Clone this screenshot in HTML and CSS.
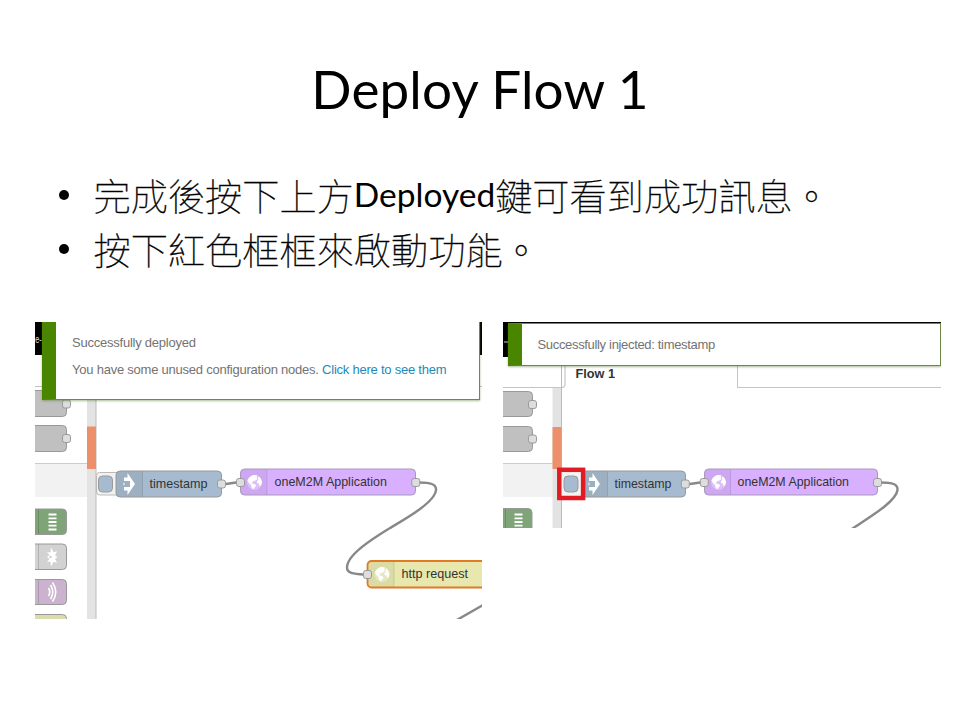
FILE: index.html
```
<!DOCTYPE html>
<html lang="zh-Hant">
<head>
<meta charset="utf-8">
<title>Deploy Flow 1</title>
<link rel="stylesheet" href="styles.css">
</head>
<body>
<svg class="defs" width="0" height="0" aria-hidden="true">
  <defs>
    <g id="port"><rect x="-4" y="-4" width="8" height="8" rx="2.3" fill="#dddddd" stroke="#999999"/></g>
    <g id="arrow"><path d="M-5-6.500H-1.500V-11L6 0L-1.500 11V6.500H-5V3H1V-3H-5Z" fill="#fff"/><path d="M-6 2.800H1V-2.800H-6Z" fill="#9cb0c3"/><path d="M-6-1.200H-4V1.200H-6Z" fill="#fff" fill-opacity=".5"/></g>
    <g id="globe">
      <circle r="7.500" fill="#fff" fill-opacity=".3"/>
      <path d="M-7-2C-6-5-3-7.500 0-7.500L3-7L2-5L3-3.500L1-2L-1-1.500L-2 0L-4 .5L-2 1L1 2L1.500 3.500L0 5L-1 7L-3 5L-3.500 2.500L-6 0Z" fill="#fff"/>
      <path d="M4-6.300C6-5 7.300-2.500 7.500 0L6.500 3L5 3.500L4.500 1L2.500 .5L2.500-1.500L4-2.500L3.500-4.500Z" fill="#fff"/>
    </g>
    <g id="bars"><path d="M-4-7.500H4M-4-3.700H4M-4 0H4M-4 3.700H4M-4 7.500H4" stroke="#fff" stroke-width="1.800"/></g>
  </defs>
</svg>
<main class="slide">
  <h1 class="title">Deploy Flow 1</h1>
  <ul class="points">
    <li>完成後按下上方<span class="latin">Deployed</span>鍵可看到成功訊息。</li>
    <li>按下紅色框框來啟動功能。</li>
  </ul>
  <div class="shots">
    <section class="shot shot-deployed">
      <svg class="canvas" viewBox="35 322 447 297">
        <path d="M35 322H482V355H35Z" fill="#000"/>
        <text x="35.200" y="343" class="node-text header-text" textLength="6.600" lengthAdjust="spacingAndGlyphs">e-</text>
        <path d="M35 355H482V387H35Z" fill="#fff"/>
        <path d="M35 386.500H482" stroke="#c4c4c4"/>
        <g stroke="#999" fill="#c0c0c0">
          <rect x="20" y="390.500" width="46.500" height="26" rx="4"/>
          <rect x="20" y="425.500" width="46.500" height="26" rx="4"/>
        </g>
        <use href="#port" x="66.500" y="404"/><use href="#port" x="66.500" y="438.500"/>
        <path d="M35 464H87V497H35Z" fill="#f2f2f2"/><path d="M35 463.500H87" stroke="#ccc"/>
        <path d="M87 387H96V619H87Z" fill="#e3e3e3"/><path d="M96 387V619" stroke="#bbb"/>
        <path d="M87 426.500H96V469H87Z" fill="#ee8f6b"/>
        <g stroke="#999">
          <rect x="20" y="509" width="46.500" height="25.500" rx="4" fill="#7fa478"/>
          <rect x="20" y="544" width="46.500" height="25.500" rx="4" fill="#d2d2d2"/>
          <rect x="20" y="579.500" width="46.500" height="25" rx="4" fill="#cbb3cf"/>
          <rect x="20" y="614.500" width="46.500" height="25" rx="4" fill="#dcdcaa"/>
        </g>
        <path d="M38.500 509V534M38.500 544V569M38.500 580V604" stroke="#000" stroke-opacity=".15"/>
        <use href="#bars" x="52.500" y="522"/>
        <path d="M51 547.500L53.500 552L57 551.500L55 555.500L57.500 557L55 559L57 562.500L53.500 562L51 566.500L50.500 561.500L47 562L49.500 559L47 557L49.500 555L47 552L50.500 552.500Z" fill="#fff"/>
        <circle cx="50.500" cy="557" r="1.300" fill="#d2d2d2"/>
        <g fill="none" stroke="#fff" stroke-width="1.600"><path d="M48.500 588Q51 592 48.500 596"/><path d="M50.500 585Q55 592 50.500 599"/><path d="M52.500 582.500Q59 592 52.500 601.500"/></g>
        <rect x="96.500" y="472.500" width="30" height="22.500" rx="3" fill="#f1f1f1" stroke="#bbb"/>
        <rect x="98.500" y="476" width="14" height="16" rx="4" fill="#a6bbcf" stroke="#999"/>
        <rect x="116" y="471" width="105.500" height="26" rx="4" fill="#a6bbcf" stroke="#999"/>
        <path d="M116.500 475Q116.500 471.500 120 471.500H142.500V496.500H120Q116.500 496.500 116.500 493Z" fill="#000" fill-opacity=".06"/>
        <path d="M142.500 471.500V496.500" stroke="#000" stroke-opacity=".1"/>
        <use href="#arrow" x="129" y="484"/>
        <text x="149.500" y="487.500" class="node-text" textLength="58" lengthAdjust="spacingAndGlyphs">timestamp</text>
        <g class="wire">
          <path d="M225 484C230 484 232 482.500 237 482.500"/>
          <path d="M419 482.500C430 482.500 436.500 484 436 490C435 502 407 518 390 528C372 539 347 555 347 567.500C347 573 353 574 364 574.500"/>
          <path d="M456 620.500L484 604.500"/>
        </g>
        <rect x="240.500" y="469" width="175" height="26" rx="4" fill="#d8b0ff" stroke="#a99ab8"/>
        <path d="M241 473Q241 469.500 244 469.500H267V494.500H244Q241 494.500 241 491Z" fill="#000" fill-opacity=".05"/>
        <path d="M267 469.500V494.500" stroke="#000" stroke-opacity=".1"/>
        <use href="#globe" x="254.500" y="482.500"/>
        <text x="274.500" y="485.800" class="node-text" textLength="112.500" lengthAdjust="spacingAndGlyphs">oneM2M Application</text>
        <use href="#port" x="221.500" y="484"/><use href="#port" x="240.500" y="482.500"/><use href="#port" x="415.800" y="482.500"/>
        <rect x="367.500" y="561" width="130" height="26.500" rx="4" fill="#e7e7ae"/>
        <path d="M368 562H394V587H368Z" fill="#000" fill-opacity=".05"/><path d="M394 562V587" stroke="#000" stroke-opacity=".1"/>
        <rect x="367.500" y="561" width="130" height="26.500" rx="4" fill="none" stroke="#e07b24" stroke-width="1.800"/>
        <use href="#globe" x="382" y="574.500"/><use href="#port" x="367.500" y="574.500"/>
        <text x="401.500" y="577.800" class="node-text" textLength="66.500" lengthAdjust="spacingAndGlyphs">http request</text>
      </svg>
      <div class="notice">
        <p>Successfully deployed</p>
        <p>You have some unused configuration nodes. <a>Click here to see them</a></p>
      </div>
    </section>
    <section class="shot shot-injected">
      <svg class="canvas" viewBox="503 322 438 206">
        <path d="M503 322H941V357H503Z" fill="#000"/>
        <path d="M504 342H508" stroke="#ccc"/>
        <path d="M508 357H941V388H508Z" fill="#fff"/>
        <path d="M503 387.500H562M737.500 387.500H941M737.500 366V388" stroke="#c4c4c4" fill="none"/>
        <g stroke="#999" fill="#c0c0c0">
          <rect x="490" y="391.500" width="42.500" height="25" rx="4"/>
          <rect x="490" y="426.500" width="42.500" height="25" rx="4"/>
        </g>
        <use href="#port" x="532.500" y="404.500"/><use href="#port" x="532.500" y="439"/>
        <path d="M503 464H553V497H503Z" fill="#f2f2f2"/><path d="M503 463.500H553" stroke="#ccc"/>
        <path d="M552.500 388H561V528H552.500Z" fill="#e3e3e3"/><path d="M561.500 366V528M565 366V385Q565 387.500 562 387.500" stroke="#bbb" fill="none"/>
        <path d="M552.500 427H561.500V469H552.500Z" fill="#ee8f6b"/>
        <text x="575.500" y="378" class="node-text tab" textLength="39.500" lengthAdjust="spacingAndGlyphs">Flow 1</text>
        <rect x="490" y="508.500" width="42" height="26" rx="4" fill="#7fa478" stroke="#999"/>
        <path d="M505.500 509V530" stroke="#000" stroke-opacity=".15"/>
        <use href="#bars" x="518.500" y="522"/>
        <rect x="580" y="471" width="105.500" height="26" rx="4" fill="#a6bbcf" stroke="#999"/>
        <path d="M581 471.500H607.500V496.500H581Z" fill="#000" fill-opacity=".06"/>
        <path d="M607.500 471.500V496.500" stroke="#000" stroke-opacity=".1"/>
        <use href="#arrow" x="594" y="484"/>
        <rect x="559.300" y="469.800" width="23.800" height="28.200" fill="#f3f3f3" stroke="#e01b24" stroke-width="4.500"/>
        <rect x="564" y="476" width="14" height="16" rx="4" fill="#a6bbcf" stroke="#999"/>
        <text x="614.500" y="487.500" class="node-text" textLength="57" lengthAdjust="spacingAndGlyphs">timestamp</text>
        <g class="wire">
          <path d="M689 484C694 484 696 482.500 701 482.500"/>
          <path d="M881 482.500C892 482.500 898 484 897.500 490C896 502 868 518 851 529.500"/>
        </g>
        <rect x="704.500" y="469" width="173" height="26" rx="4" fill="#d8b0ff" stroke="#a99ab8"/>
        <path d="M705 473Q705 469.500 708 469.500H730.500V494.500H708Q705 494.500 705 491Z" fill="#000" fill-opacity=".05"/>
        <path d="M730.500 469.500V494.500" stroke="#000" stroke-opacity=".1"/>
        <use href="#globe" x="718.500" y="482.500"/>
        <text x="737.500" y="485.800" class="node-text" textLength="111.500" lengthAdjust="spacingAndGlyphs">oneM2M Application</text>
        <use href="#port" x="685.300" y="484"/><use href="#port" x="704.300" y="482.500"/><use href="#port" x="877.500" y="482.500"/>
      </svg>
      <div class="notice">
        <p>Successfully injected: timestamp</p>
      </div>
    </section>
  </div>
</main>
</body>
</html>
```
FILE: styles.css
```
* { box-sizing: border-box; }
body { margin: 0; background: #fff; color: #000; }
.defs { position: absolute; }
.slide { width: 960px; height: 720px; overflow: hidden; padding: 53px 19px 0 35px; }
.title {
  margin: 0 0 0 -16px;
  height: 115px;
  font: 400 53px/72px Lato, sans-serif;
  text-align: center;
  letter-spacing: 0.15px;
}
.points { list-style: none; margin: 0; padding: 0 0 0 58.500px; height: 154px; }
.points li {
  position: relative;
  height: 54px;
  line-height: 54px;
  font-family: "Noto Sans CJK TC", sans-serif;
  font-size: 37.2px;
  font-weight: 100;
  -webkit-text-stroke: 0.35px #000;
  white-space: nowrap;
}
.points li::before {
  content: "";
  position: absolute;
  left: -35px;
  top: 22px;
  width: 10px;
  height: 10px;
  border-radius: 50%;
  background: #000;
}
.latin {
  position: relative;
  top: -4px;
  font-family: Lato, sans-serif;
  font-size: 33.5px;
  font-weight: 400;
  -webkit-text-stroke: 0;
}
.shots { display: flex; align-items: flex-start; gap: 21px; }
.shot { position: relative; overflow: hidden; }
.shot-deployed { width: 447px; height: 297px; }
.shot-injected { width: 438px; height: 206px; }
.canvas { display: block; width: 100%; height: 100%; }
.wire { fill: none; stroke: #888; stroke-width: 2.4; }
.node-text { font-family: "Liberation Sans", Arial, sans-serif; font-size: 13.2px; fill: #333; }
.header-text { fill: #ddd; font-size: 10px; }
.tab { font-weight: 700; }
.notice {
  position: absolute;
  background: #fff;
  border: 1px solid #6b8a42;
  border-left: 14px solid #4a8500;
  box-shadow: 0 1px 2px rgba(90, 120, 50, .5);
  font: 13px/16px "Liberation Sans", Arial, sans-serif;
  letter-spacing: -0.23px;
  color: #737373;
  white-space: nowrap;
}
.notice p { margin: 0; }
.notice a { color: #1d8ab8; }
.shot-deployed .notice { left: 7px; top: -1px; width: 438px; height: 79px; padding: 13px 0 0 16px; }
.shot-deployed .notice p + p { margin-top: 11px; }
.shot-injected .notice { left: 5px; top: 1px; width: 433px; height: 43px; padding: 12.500px 0 0 15.500px; letter-spacing: -0.33px; }
```
